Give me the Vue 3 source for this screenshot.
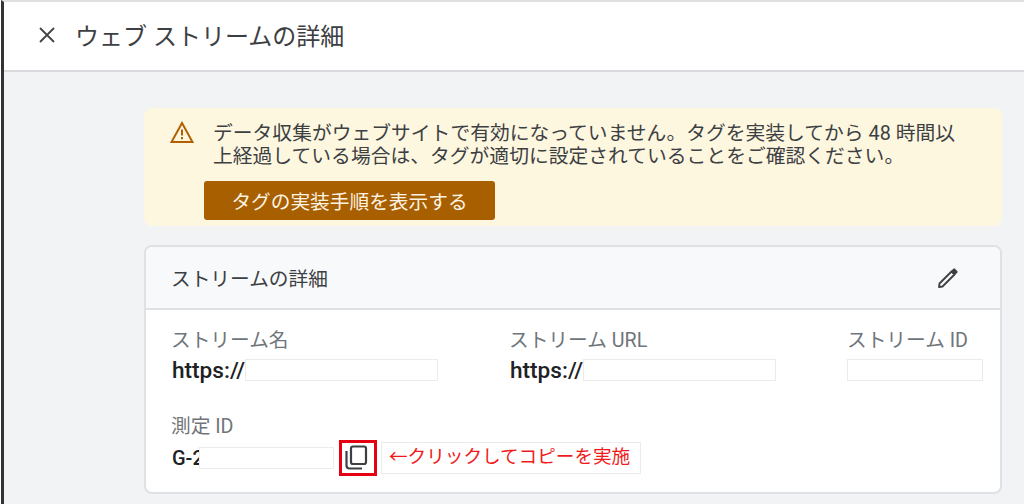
<script setup>
const jp = 'ja'
const fields = [
  { label: 'ストリーム名', prefix: 'https://', box: 193 },
  { label: 'ストリーム URL', prefix: 'https://', box: 193 },
  { label: 'ストリーム ID', prefix: '', box: 136 },
]
</script>

<template>
  <div class="page" :lang="jp">
    <header class="topbar">
      <svg class="close" width="16" height="16" viewBox="0 0 16 16">
        <path d="M1 1 L15 15 M15 1 L1 15" fill="none" stroke="#444" stroke-width="1.8" />
      </svg>
      <h1 class="title">ウェブ ストリームの詳細</h1>
    </header>

    <main class="content">
      <section class="banner">
        <svg class="warn" width="24" height="22" viewBox="0 0 24 22">
          <path d="M12 2 L22.5 21 L1.5 21 Z" fill="none" stroke="#b06000" stroke-width="2" stroke-linejoin="miter" />
          <path d="M11 8.5 h2 v6 h-2 z M11 16 h2 v2.2 h-2 z" fill="#b06000" />
        </svg>
        <div class="banner-body">
          <p class="message">データ収集がウェブサイトで有効になっていません。タグを実装してから 48 時間以上経過している場合は、タグが適切に設定されていることをご確認ください。</p>
          <button class="guide">タグの実装手順を表示する</button>
        </div>
      </section>

      <section class="card">
        <div class="card-head">
          <span class="card-title">ストリームの詳細</span>
          <svg width="24" height="24" viewBox="0 0 24 24">
            <path d="M3 21 L3.5 17.5 L15.5 5.5 L18.5 8.5 L6.5 20.5 Z" fill="none" stroke="#3c4043" stroke-width="1.8" stroke-linejoin="round" />
            <path d="M15 5 L17.6 2.6 Q18.2 2.2 18.8 2.6 L21.4 5.2 Q21.8 5.8 21.4 6.4 L19 9 Z" fill="#3c4043" />
          </svg>
        </div>
        <div class="card-body">
          <div class="fields">
            <div v-for="f in fields" :key="f.label" class="field">
              <div class="label">{{ f.label }}</div>
              <div class="value">
                <span v-if="f.prefix" class="prefix">{{ f.prefix }}</span>
                <i class="mask" :style="{ width: f.box + 'px' }"></i>
              </div>
            </div>
          </div>
          <div class="measure">
            <div class="label">測定 ID</div>
            <div class="measure-row">
              <span class="value-text">G-2</span>
              <i class="mask id-mask"></i>
              <span class="copy">
                <svg width="26" height="26" viewBox="0 0 26 26">
                  <rect x="6" y="1.5" width="15" height="17.5" rx="2" fill="none" stroke="#3c4043" stroke-width="2.2" />
                  <path d="M1.5 6 V20.5 Q1.5 23.5 4.5 23.5 H17" fill="none" stroke="#3c4043" stroke-width="2.2" />
                </svg>
              </span>
              <span class="note">←クリックしてコピーを実施</span>
            </div>
          </div>
        </div>
      </section>
    </main>
  </div>
</template>

<style>
html, body {
  margin: 0;
  background: #fff;
}
</style>

<style scoped>
.page {
  width: 1023px;
  height: 504px;
  margin-left: 1px;
  overflow: hidden;
  box-sizing: border-box;
  border-left: 3px solid #333;
  border-top: 2px solid #e0e0e0;
  background: #f1f3f4;
  font-family: Roboto, "Noto Sans CJK JP", sans-serif;
  color: #3c4043;
}

.topbar {
  height: 70px;
  box-sizing: border-box;
  background: #fff;
  border-bottom: 2px solid #d8dadd;
  display: flex;
  align-items: center;
  padding-left: 35px;
  padding-bottom: 3px;
}

.close {
  margin-right: 20px;
}

.title {
  margin: 0;
  font-size: 24px;
  font-weight: 400;
  color: #3c4043;
  white-space: nowrap;
}

.content {
  padding: 36px 22px 0 140px;
}

.banner {
  height: 118px;
  box-sizing: border-box;
  background: #fef7e0;
  border-radius: 8px;
  display: flex;
  padding: 15px 0 0 26px;
  margin-bottom: 19px;
}

.warn {
  flex: none;
  margin-top: -2px;
}

.banner-body {
  margin-left: 19px;
}

.message {
  margin: 0;
  width: 760px;
  font-size: 19.8px;
  line-height: 22.5px;
  color: #3c4043;
}

.guide {
  display: block;
  margin: 13px 0 0 -9px;
  width: 291px;
  height: 39px;
  border: 0;
  border-radius: 3px;
  background: #a85f00;
  color: #fdf3e2;
  font-family: inherit;
  font-size: 19.7px;
  padding: 0;
}

.card {
  height: 249px;
  box-sizing: border-box;
  background: #fff;
  border: 2px solid #dfe1e5;
  border-radius: 8px;
  overflow: hidden;
}

.card-head {
  height: 61px;
  background: #f8f9fa;
  border-bottom: 2px solid #dfe1e5;
  display: flex;
  align-items: center;
  justify-content: space-between;
  padding: 0 40px 0 25px;
}

.card-title {
  font-size: 19.7px;
  color: #3c4043;
}

.card-body {
  padding: 19px 0 0 25px;
}

.fields {
  display: grid;
  grid-template-columns: repeat(3, 338px);
}

.label {
  font-size: 19.7px;
  line-height: 24px;
  color: #70757a;
  white-space: nowrap;
}

.value {
  display: flex;
  align-items: center;
  height: 22px;
  margin-top: 6px;
  font-size: 22.6px;
  font-weight: 500;
  color: #202124;
}

.prefix {
  margin-left: 1px;
}

.mask {
  display: block;
  height: 22px;
  box-sizing: border-box;
  background: #fff;
  border: 1px solid #ebebeb;
}

.measure {
  margin-top: 34px;
}

.measure-row {
  display: flex;
  align-items: center;
  margin-top: 1px;
  height: 36px;
}

.value-text {
  flex: none;
  width: 27px;
  margin-left: 1px;
  font-size: 20px;
  font-weight: 500;
  color: #202124;
  white-space: nowrap;
}

.id-mask {
  width: 135px;
}

.copy {
  display: flex;
  align-items: center;
  justify-content: center;
  width: 38px;
  height: 36px;
  box-sizing: border-box;
  border: 3px solid #e60012;
  margin-left: 5px;
}

.note {
  display: block;
  height: 32px;
  box-sizing: border-box;
  margin-left: 4px;
  width: 260px;
  padding-left: 7px;
  border: 1px solid #ebebeb;
  color: #f01a1a;
  font-size: 18.6px;
  line-height: 29px;
  white-space: nowrap;
}
</style>
